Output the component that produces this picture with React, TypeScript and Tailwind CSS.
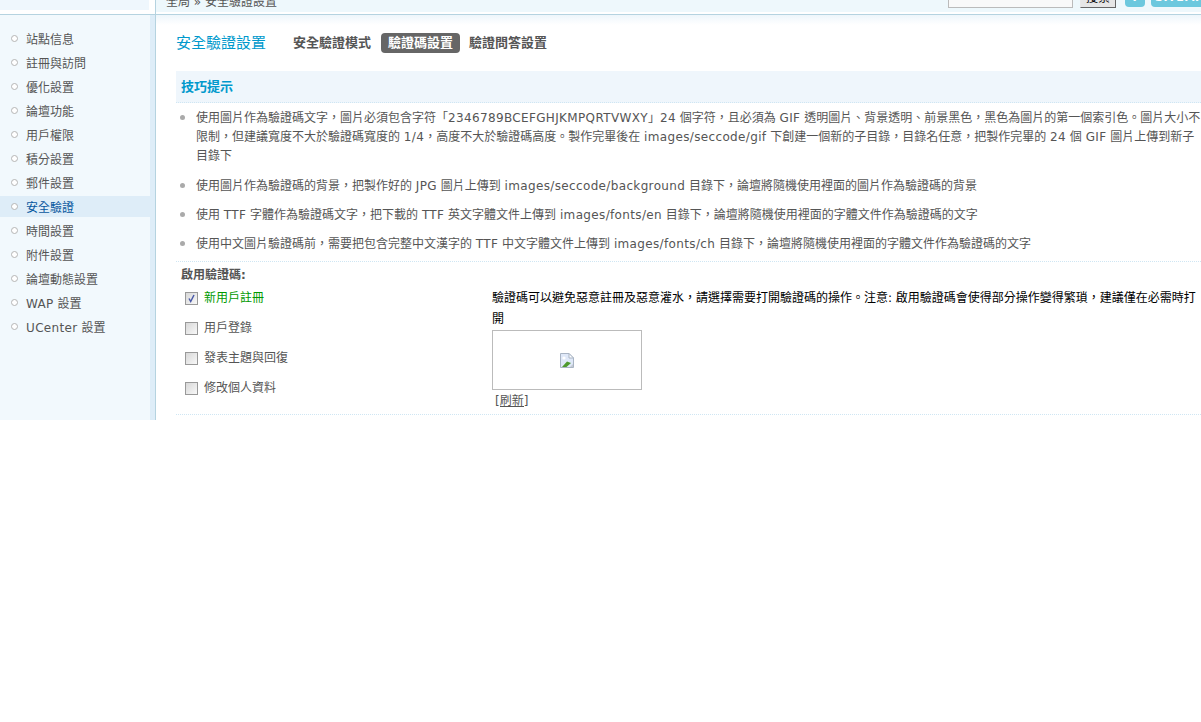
const menu = ['站點信息', '註冊與訪問', '優化設置', '論壇功能', '用戶權限', '積分設置', '郵件設置', '安全驗證', '時間設置', '附件設置', '論壇動態設置', 'WAP 設置', 'UCenter 設置'];

const tips = [
  ['使用圖片作為驗證碼文字，圖片必須包含字符「2346789BCEFGHJKMPQRTVWXY」24 個字符，且必須為 GIF 透明圖片、背景透明、前景黑色，黑色為圖片的第一個索引色。圖片大小不', '限制，但建議寬度不大於驗證碼寬度的 1/4，高度不大於驗證碼高度。製作完畢後在 images/seccode/gif 下創建一個新的子目錄，目錄名任意，把製作完畢的 24 個 GIF 圖片上傳到新子', '目錄下'],
  ['使用圖片作為驗證碼的背景，把製作好的 JPG 圖片上傳到 images/seccode/background 目錄下，論壇將隨機使用裡面的圖片作為驗證碼的背景'],
  ['使用 TTF 字體作為驗證碼文字，把下載的 TTF 英文字體文件上傳到 images/fonts/en 目錄下，論壇將隨機使用裡面的字體文件作為驗證碼的文字'],
  ['使用中文圖片驗證碼前，需要把包含完整中文漢字的 TTF 中文字體文件上傳到 images/fonts/ch 目錄下，論壇將隨機使用裡面的字體文件作為驗證碼的文字'],
];

const options = [
  { label: '新用戶註冊', checked: true },
  { label: '用戶登錄', checked: false },
  { label: '發表主題與回復', checked: false },
  { label: '修改個人資料', checked: false },
];

// latin runs are a bit wider in the reference than DejaVu gives
function Mixed({ text }: { text: string }) {
  const parts = text.split(/([A-Za-z0-9/]+)/);
  return (
    <>
      {parts.map((part, i) =>
        i % 2 === 1 ? (
          <span key={i} className="tracking-[0.35px]">{part}</span>
        ) : (
          <span key={i}>{part}</span>
        ),
      )}
    </>
  );
}

function Checkbox({ checked }: { checked: boolean }) {
  return (
    <span className="flex h-[13px] w-[13px] shrink-0 items-center justify-center border border-[#999] bg-gradient-to-br from-[#d8d8d8] to-[#f8f8f8]">
      {checked && (
        <svg width="11" height="11" viewBox="0 0 11 11">
          <path d="M3 5.5 L4.7 8.5 L8 2" fill="none" stroke="#4a5aa8" strokeWidth="1.5" />
        </svg>
      )}
    </span>
  );
}

function BrokenImage() {
  return (
    <svg width="14" height="15" viewBox="0 0 14 15">
      <path d="M0.5 0.5 H9 L13.5 5 V14.5 H0.5 Z" fill="#dfe8f8" stroke="#a9b4c4" />
      <path d="M9 0.5 V5 H13.5 Z" fill="#ffffff" stroke="#a9b4c4" />
      <circle cx="4" cy="5" r="1.6" fill="#ffffff" />
      <path d="M2 14 L7 8.5 L11 10 L6.5 14 Z" fill="#4f9a2e" />
      <path d="M10 14 L13 11 V14 Z" fill="#c3c9d2" />
    </svg>
  );
}

export default function App() {
  return (
    <div className="h-[722px] w-[1201px] overflow-hidden bg-white font-['DejaVu_Sans','Noto_Sans_CJK_TC',sans-serif] text-[12px] text-[#555]">
      <div className="flex h-[420px] flex-col">
        <header className="flex h-[15px] shrink-0 border-b border-[#b5d3e0]">
          <div className="h-full w-[155px] shrink-0">
            <div className="h-[10px] w-[149px] bg-[#eff7fd]" />
          </div>
          <div className="h-full w-px shrink-0 bg-[#b5d3e0]" />
          <div className="flex h-[12px] flex-1 items-end overflow-hidden bg-[#eef8fc] pb-[4px] pl-[10px]">
            <span className="mb-[-1px] whitespace-nowrap leading-[14px]">全局 » 安全驗證設置</span>
            <div className="ml-auto flex items-end">
              <div className="h-[20px] w-[125px] border border-[#bbb] bg-[#f9f9f9]" />
              <div className="ml-[7px] flex h-[20px] w-[36px] items-center justify-center border border-[#e8e8e8] border-r-[#666] border-b-[#666] bg-[#e6e6e6] leading-none text-black">搜索</div>
              <div className="mb-[1px] ml-[9px] flex h-[20px] w-[20px] items-center justify-center rounded-[4px] bg-[#6cc8de] font-bold leading-none text-white">?</div>
              <div className="mb-[1px] ml-[6px] mr-[-10px] flex h-[20px] w-[60px] items-center rounded-[4px] bg-[#6cc8de] pl-[4px] text-[11px] font-bold leading-none tracking-wider text-white">SITEMAP</div>
            </div>
          </div>
        </header>

        <div className="flex min-h-0 flex-1">
          <aside className="w-[150px] shrink-0 bg-[#f2f9fd] pt-[13px]">
            {menu.map((item) => {
              const active = item === '安全驗證';
              return (
                <div key={item} className={active ? 'mb-[3px] flex h-[21px] items-center bg-[#deedf8] pt-[2px] text-[#09589f]' : 'mb-[3px] flex h-[21px] items-center pt-[2px]'}>
                  <span className="mb-[2px] ml-[11px] mr-[8px] h-[7px] w-[7px] rounded-full border border-[#b5b5b5] bg-white" />
                  <span className="whitespace-nowrap"><Mixed text={item} /></span>
                </div>
              );
            })}
          </aside>
          <div className="w-[5px] shrink-0 bg-[#deedf8]" />
          <div className="w-px shrink-0 bg-[#b5d3e0]" />

          <main className="min-w-0 flex-1 bg-gradient-to-b from-[#eef6fb] to-white to-[10px] pl-[20px]">
            <div className="flex h-[56px] items-center">
              <h1 className="w-[117px] text-[15px] leading-none text-[#0099cc]">安全驗證設置</h1>
              <span className="whitespace-nowrap text-[13px] font-bold">安全驗證模式</span>
              <span className="ml-[10px] flex h-[20px] w-[79px] items-center justify-center rounded-[4px] bg-[#666] text-[13px] font-bold text-white">驗證碼設置</span>
              <span className="ml-[9px] whitespace-nowrap text-[13px] font-bold">驗證問答設置</span>
            </div>

            <div className="flex h-[32px] items-center border-b border-dotted border-[#cfe6f3] bg-[#eff6fc] pl-[5px] text-[13px] font-bold text-[#0099cc]">技巧提示</div>

            <ul className="h-[159px] border-b border-dotted border-[#cfe6f3] pt-[6px]">
              {tips.map((lines) => (
                <li key={lines[0]} className="relative mb-[10px] pl-[20px] leading-[19.2px]">
                  <span className="absolute left-[4px] top-[6px] h-[5px] w-[5px] rounded-full bg-[#aaa]" />
                  {lines.map((line) => (
                    <div key={line} className="whitespace-nowrap"><Mixed text={line} /></div>
                  ))}
                </li>
              ))}
            </ul>

            <div className="h-[153px] border-b border-dotted border-[#cfe6f3]">
              <div className="flex h-[24px] items-center pl-[5px] pt-[2px] font-bold">啟用驗證碼:</div>
              <div className="flex">
                <div className="w-[316px] shrink-0 pl-[9px]">
                  {options.map((opt) => (
                    <div key={opt.label} className="flex h-[30px] items-center pb-[6px]">
                      <Checkbox checked={opt.checked} />
                      <span className={opt.checked ? 'ml-[6px] text-[#009900]' : 'ml-[6px]'}>{opt.label}</span>
                    </div>
                  ))}
                </div>
                <div className="min-w-0 flex-1">
                  <p className="pt-[2px] leading-[21px] text-black">
                    <span className="block whitespace-nowrap">驗證碼可以避免惡意註冊及惡意灌水，請選擇需要打開驗證碼的操作。注意: 啟用驗證碼會使得部分操作變得繁瑣，建議僅在必需時打</span>
                    <span className="block">開</span>
                  </p>
                  <div className="flex h-[60px] w-[150px] items-center justify-center border border-[#bbb]">
                    <BrokenImage />
                  </div>
                  <a className="ml-[3px] mt-[3px] block w-fit leading-[16px] underline">[刷新]</a>
                </div>
              </div>
            </div>
          </main>
        </div>
      </div>
    </div>
  );
}
